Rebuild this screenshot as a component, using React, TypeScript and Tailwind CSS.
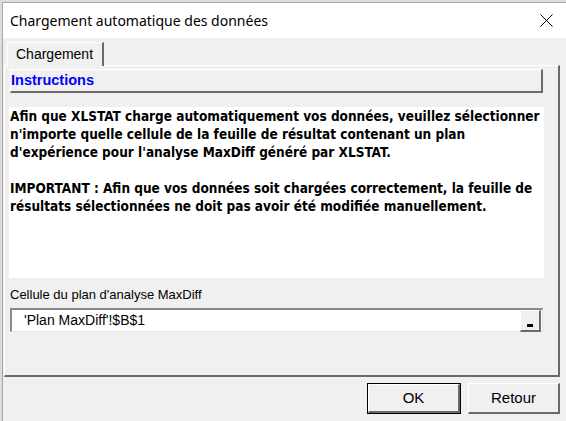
import React from "react";

export default function App() {
  return (
    <div className="w-[566px] h-[421px] bg-[#dcdcdc] overflow-hidden relative" style={{ fontFamily: '"Liberation Sans", Arial, sans-serif' }}>
      <div className="absolute left-[2px] top-[2px] w-[566px] h-[421px] bg-[#f0f0f0] border-l border-t border-[#a8a8a8] flex flex-col">
        {/* Title bar */}
        <div className="h-[35px] bg-white flex items-center justify-between shrink-0">
          <span className="ml-[7px] text-[14px] text-black leading-none" style={{ fontFamily: '"Noto Sans", sans-serif' }}>Chargement automatique des données</span>
          <svg className="mr-[15px]" width="13" height="13" viewBox="0 0 13 13">
            <path d="M0.5 0.5 L12.5 12.5 M12.5 0.5 L0.5 12.5" stroke="#000" strokeWidth="1" />
          </svg>
        </div>
        {/* Tab strip */}
        <div className="h-[27px] flex items-end pl-[4px] shrink-0">
          <div className="h-[24px] w-[97px] border-l border-t border-white border-r-2 border-r-[#6a6a6a] flex items-center pl-[8px] text-[14px] text-black relative top-[1px] bg-[#f0f0f0] z-10">
            Chargement
          </div>
        </div>
        {/* Page */}
        <div className="ml-[1px] w-[556px] h-[312px] border-t border-l border-white border-r-2 border-b-2 border-r-[#6a6a6a] border-b-[#6a6a6a] flex flex-col pl-[5px] pt-[3px]">
          <div className="w-[533px] h-[24px] border-t border-l border-white border-r-2 border-b-2 border-r-[#6a6a6a] border-b-[#6a6a6a] flex items-center">
            <span className="text-[14.5px] font-bold text-[#0000ff] leading-none">Instructions</span>
          </div>
          <div className="mt-[14px] -ml-[1px] w-[535px] h-[171px] bg-white pt-[0px] pl-[1px] text-[13.5px] font-bold text-black leading-[18px]" style={{ fontFamily: '"DejaVu Sans Condensed", "DejaVu Sans", sans-serif' }}>
            <div className="whitespace-nowrap">Afin que XLSTAT charge automatiquement vos données, veuillez sélectionner</div>
            <div className="whitespace-nowrap">n'importe quelle cellule de la feuille de résultat contenant un plan</div>
            <div className="whitespace-nowrap">d'expérience pour l'analyse MaxDiff généré par XLSTAT.</div>
            <div className="h-[18px]"></div>
            <div className="whitespace-nowrap">IMPORTANT : Afin que vos données soit chargées correctement, la feuille de</div>
            <div className="whitespace-nowrap">résultats sélectionnées ne doit pas avoir été modifiée manuellement.</div>
          </div>
          <div className="mt-[9px] text-[13px] text-black leading-[16px]">Cellule du plan d'analyse MaxDiff</div>
          <div className="mt-[5px] w-[533px] h-[24px] bg-white border-t-2 border-l-2 border-t-[#8a8a8a] border-l-[#8a8a8a] border-b border-r border-b-[#e3e3e3] border-r-[#e3e3e3] flex items-center justify-between">
            <span className="ml-[12px] text-[14px] text-black">'Plan MaxDiff'!$B$1</span>
            <div className="mr-[1px] w-[21px] h-[22px] bg-[#f0f0f0] border-t border-l border-white border-r-2 border-b-2 border-r-[#6a6a6a] border-b-[#6a6a6a] flex items-end justify-center pb-[3px]">
              <div className="w-[6px] h-[3px] bg-black"></div>
            </div>
          </div>
        </div>
        {/* Buttons */}
        <div className="flex justify-end gap-[7px] pr-[8px] mt-[6px]">
          <div className="w-[94px] h-[31px] border border-black">
            <div className="w-full h-full border-t border-l border-white border-r-2 border-b-2 border-r-[#6a6a6a] border-b-[#6a6a6a] flex items-center justify-center text-[15px] text-black">OK</div>
          </div>
          <div className="w-[92px] h-[31px] border-t border-l border-white border-r-2 border-b-2 border-r-[#6a6a6a] border-b-[#6a6a6a] flex items-center justify-center text-[15px] text-black">Retour</div>
        </div>
      </div>
    </div>
  );
}
